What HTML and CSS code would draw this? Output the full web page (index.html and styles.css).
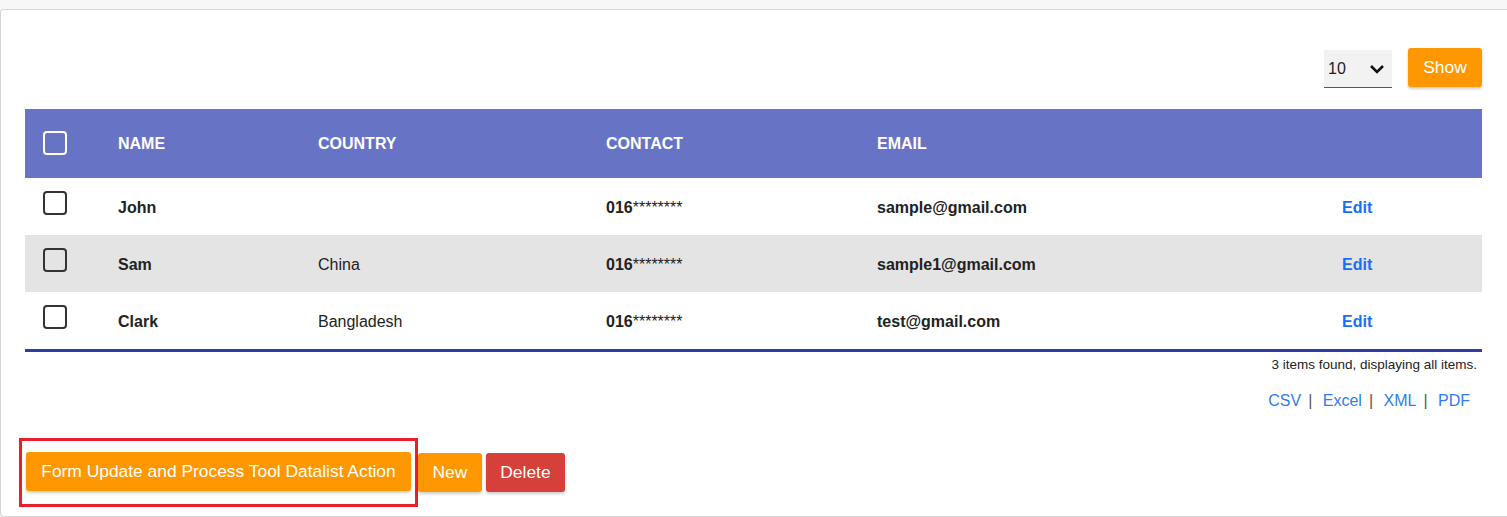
FILE: index.html
```html
<!DOCTYPE html>
<html lang="en">
  <head>
    <meta charset="utf-8" />
    <title>Datalist</title>
    <link rel="stylesheet" href="styles.css">
  </head>
  <body>
    <div class="card">
      <!-- Page size -->
      <div class="toolbar">
        <div class="page-size">
          <span>10</span>
          <svg width="16" height="10" viewBox="0 0 16 10"><path d="M2 2l6 6 6-6" fill="none" stroke="#111" stroke-width="2.6"/></svg>
        </div>
        <button class="btn btn-orange btn-show">Show</button>
      </div>

      <table class="datalist">
        <colgroup>
          <col style="width:75px">
          <col style="width:200px">
          <col style="width:288px">
          <col style="width:271px">
          <col style="width:465px">
          <col style="width:158px">
        </colgroup>
        <thead>
          <tr>
            <th><span class="check check-light"></span></th>
            <th>NAME</th>
            <th>COUNTRY</th>
            <th>CONTACT</th>
            <th>EMAIL</th>
            <th></th>
          </tr>
        </thead>
        <tbody>
          <tr>
            <td><span class="check"></span></td>
            <td class="strong">John</td>
            <td></td>
            <td><b>016</b>********</td>
            <td class="strong">sample@gmail.com</td>
            <td><a class="edit" href="#">Edit</a></td>
          </tr>
          <tr class="odd">
            <td><span class="check"></span></td>
            <td class="strong">Sam</td>
            <td>China</td>
            <td><b>016</b>********</td>
            <td class="strong">sample1@gmail.com</td>
            <td><a class="edit" href="#">Edit</a></td>
          </tr>
          <tr>
            <td><span class="check"></span></td>
            <td class="strong">Clark</td>
            <td>Bangladesh</td>
            <td><b>016</b>********</td>
            <td class="strong">test@gmail.com</td>
            <td><a class="edit" href="#">Edit</a></td>
          </tr>
        </tbody>
      </table>

      <div class="pagebanner">3 items found, displaying all items.</div>

      <div class="exportlinks">
        <a href="#">CSV</a><span class="sep">|</span>
        <a href="#">Excel</a><span class="sep">|</span>
        <a href="#">XML</a><span class="sep">|</span>
        <a href="#">PDF</a>
      </div>

      <div class="actions">
        <span class="highlight">
          <button class="btn btn-orange btn-wide">Form Update and Process Tool Datalist Action</button>
        </span>
        <button class="btn btn-orange">New</button>
        <button class="btn btn-red">Delete</button>
      </div>
    </div>
  </body>
</html>
```

FILE: styles.css
```css
* {
  margin: 0;
  padding: 0;
  box-sizing: border-box;
}

body {
  font-family: 'Liberation Sans', Arial, sans-serif;
  background-color: #f7f7f7;
  color: #222;
  padding-top: 9px;
}

.card {
  background: #fff;
  border: 1px solid #d4d4d4;
  border-right: none;
  border-radius: 4px 0 0 4px;
  padding: 0 24px 0 24px;
  height: 508px;
}

/* Toolbar */
.toolbar {
  display: flex;
  justify-content: flex-end;
  align-items: flex-start;
  gap: 16px;
  padding-top: 38px;
  padding-right: 1px;
}

.page-size {
  margin-top: 2px;
  width: 68px;
  height: 38px;
  background: #f2f2f2;
  border-bottom: 1px solid #555;
  display: flex;
  align-items: center;
  justify-content: space-between;
  padding: 0 7px 0 4px;
  font-size: 16px;
  color: #222;
}

.page-size svg {
  display: block;
}

.btn {
  font-family: 'Liberation Sans', Arial, sans-serif;
  font-size: 17.4px;
  color: #fff;
  border: none;
  border-radius: 3px;
  height: 39px;
  padding: 0 14.5px;
  box-shadow: 0 2px 3px rgba(0, 0, 0, 0.2);
  cursor: pointer;
}

.btn-orange {
  background: #ff9800;
}

.btn-red {
  background: #d6403b;
}

.btn-show {
  width: 74px;
  padding: 0;
}

.btn-wide {
  width: 385px;
  padding: 0;
}

/* Table */
.datalist {
  margin-top: 21px;
  width: 1457px;
  table-layout: fixed;
  border-collapse: separate;
  border-spacing: 0;
  border-bottom: 3px solid #303f9f;
  font-size: 16px;
}

.datalist th,
.datalist td {
  padding: 0 18px;
  text-align: left;
  vertical-align: middle;
  white-space: nowrap;
}

.datalist td {
  padding-top: 2px;
}

.datalist thead tr {
  background: #6774c5;
  height: 69px;
}

.datalist th {
  color: #fff;
  font-weight: bold;
  padding-top: 1px;
}

.datalist tbody tr {
  height: 57px;
}

.datalist tbody tr.odd {
  background: #e4e4e4;
}

.datalist .strong {
  font-weight: bold;
}

.check {
  display: block;
  width: 24px;
  height: 24px;
  border: 2px solid #333;
  border-radius: 4px;
  margin-bottom: 10px;
}

.check-light {
  border-color: #fff;
  margin-bottom: 3px;
}

.edit {
  color: #1a6ef5;
  font-weight: bold;
  text-decoration: none;
}

/* Footer */
.pagebanner {
  margin-top: 4px;
  text-align: right;
  padding-right: 5px;
  font-size: 13.5px;
  line-height: 18px;
  width: 1457px;
}

.exportlinks {
  margin-top: 17px;
  width: 1457px;
  text-align: right;
  padding-right: 12px;
  font-size: 16px;
  line-height: 20px;
}

.exportlinks a {
  color: #337bf0;
  text-decoration: none;
}

.exportlinks .sep {
  color: #555;
  margin: 0 6px 0 7px;
}

.actions {
  margin-top: 27px;
  margin-left: -6px;
  display: flex;
  align-items: center;
}

.highlight {
  display: inline-flex;
  border: 3px solid #e8202a;
  padding: 11px 4px 13px 4px;
}

.actions .btn-red {
  margin-left: 4px;
}
```
